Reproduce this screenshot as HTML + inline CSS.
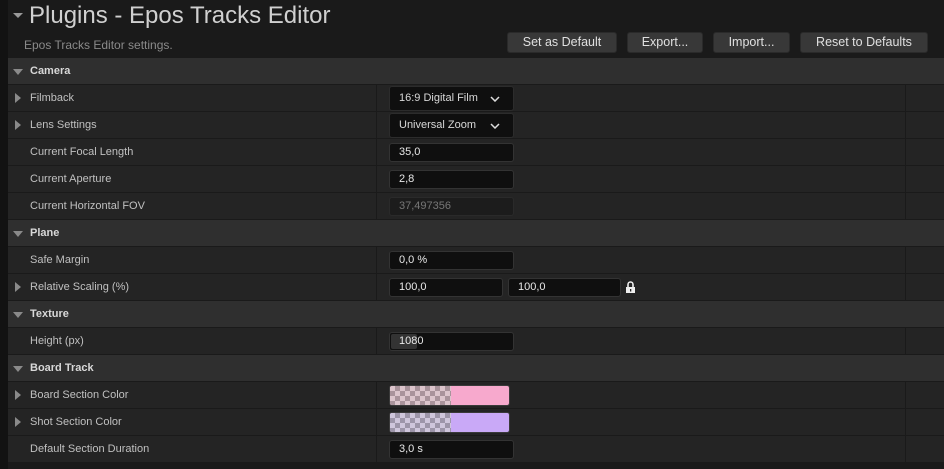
<!DOCTYPE html>
<html><head><style>
*{margin:0;padding:0;box-sizing:border-box}
body{width:944px;height:469px;background:#1a1a1a;font-family:"Liberation Sans",sans-serif;position:relative;overflow:hidden;color:#c0c0c0}
.strip{position:absolute;left:0;top:0;width:8px;height:469px;background:#121212}
.title{position:absolute;left:29px;top:2px;font-size:24px;color:#d0d0d0}
.tarrow{position:absolute;left:13px;top:13px;width:0;height:0;border-left:5px solid transparent;border-right:5px solid transparent;border-top:5px solid #999}
.sub{position:absolute;left:24px;top:38px;font-size:12px;color:#8a8a8a}
.btn{position:absolute;top:32px;height:21px;background:#383838;border-radius:3px;border:1px solid #2a2a2a;color:#e0e0e0;font-size:12.5px;text-align:center;line-height:19px}
.row{position:absolute;left:8px;width:936px;height:26px;background:#242424;font-size:11px;line-height:26px}
.hdr{background:#2f2f2f;font-weight:bold;color:#d8d8d8}
.row .l{position:absolute;left:22px}
.row .dv{position:absolute;left:368px;top:0;width:1px;height:26px;background:#1a1a1a}
.row .dv2{position:absolute;left:897px;top:0;width:1px;height:26px;background:#1a1a1a}
.ra{position:absolute;left:7px;top:8px;width:0;height:0;border-top:5px solid transparent;border-bottom:5px solid transparent;border-left:6px solid #8a8a8a}
.da{position:absolute;left:5px;top:11px;width:0;height:0;border-left:5px solid transparent;border-right:5px solid transparent;border-top:6px solid #8a8a8a}
.in{position:absolute;top:4px;height:19px;background:#0f0f0f;border:1px solid #333;border-radius:3px;color:#e8e8e8;font-size:11px;line-height:17px;padding-left:9px}
.cb{position:absolute;top:1px;height:25px;left:381px;width:125px;background:#0f0f0f;border:1px solid #2c2c2c;border-radius:3px;color:#d8d8d8;font-size:11px;line-height:23px;padding-left:9px}
.cb svg{position:absolute;right:13px;top:9px}
.col{position:absolute;top:3px;left:381px;width:121px;height:21px;border-radius:3px;overflow:hidden;border:1px solid #3a3a3a}
.chk{position:absolute;left:0;top:0;width:61px;height:21px;background-size:10px 10px;background-position:0 0,5px 5px}
</style></head><body>
<div class="strip"></div>
<div class="tarrow"></div>
<div class="title">Plugins - Epos Tracks Editor</div>
<div class="sub">Epos Tracks Editor settings.</div>
<div class="btn" style="left:507px;width:110px">Set as Default</div>
<div class="btn" style="left:627px;width:76px">Export...</div>
<div class="btn" style="left:713px;width:77px">Import...</div>
<div class="btn" style="left:800px;width:128px">Reset to Defaults</div>

<div class="row hdr" style="top:58px"><div class="da"></div><span class="l">Camera</span></div>
<div class="row" style="top:85px"><div class="ra"></div><span class="l">Filmback</span><div class="dv"></div><div class="dv2"></div><div class="cb">16:9 Digital Film<svg width="10" height="6"><path d="M1 1L5 5L9 1" stroke="#ddd" stroke-width="1.5" fill="none"/></svg></div></div>
<div class="row" style="top:112px"><div class="ra"></div><span class="l">Lens Settings</span><div class="dv"></div><div class="dv2"></div><div class="cb">Universal Zoom<svg width="10" height="6"><path d="M1 1L5 5L9 1" stroke="#ddd" stroke-width="1.5" fill="none"/></svg></div></div>
<div class="row" style="top:139px"><span class="l">Current Focal Length</span><div class="dv"></div><div class="dv2"></div><div class="in" style="left:381px;width:125px">35,0</div></div>
<div class="row" style="top:166px"><span class="l">Current Aperture</span><div class="dv"></div><div class="dv2"></div><div class="in" style="left:381px;width:125px">2,8</div></div>
<div class="row" style="top:193px"><span class="l">Current Horizontal FOV</span><div class="dv"></div><div class="dv2"></div><div class="in" style="left:381px;width:125px;background:#1c1c1c;border-color:#2a2a2a;color:#777">37,497356</div></div>

<div class="row hdr" style="top:220px"><div class="da"></div><span class="l">Plane</span></div>
<div class="row" style="top:247px"><span class="l">Safe Margin</span><div class="dv"></div><div class="dv2"></div><div class="in" style="left:381px;width:125px">0,0 %</div></div>
<div class="row" style="top:274px"><div class="ra"></div><span class="l">Relative Scaling (%)</span><div class="dv"></div><div class="dv2"></div><div class="in" style="left:381px;width:114px">100,0</div><div class="in" style="left:500px;width:113px">100,0</div>
<svg style="position:absolute;left:617px;top:6px" width="11" height="14"><path d="M3 7V4.5a2.5 2.5 0 0 1 5 0V7" stroke="#eee" stroke-width="1.6" fill="none"/><rect x="1" y="7" width="9" height="6" fill="#eee"/><rect x="5" y="9" width="1.3" height="2.5" fill="#222"/></svg></div>

<div class="row hdr" style="top:301px"><div class="da"></div><span class="l">Texture</span></div>
<div class="row" style="top:328px"><span class="l">Height (px)</span><div class="dv"></div><div class="dv2"></div><div class="in" style="left:381px;width:125px"><div style="position:absolute;left:1px;top:1px;width:26px;height:15px;background:#333;border-radius:2px"></div><span style="position:relative">1080</span></div></div>

<div class="row hdr" style="top:355px"><div class="da"></div><span class="l">Board Track</span></div>
<div class="row" style="top:382px"><div class="ra"></div><span class="l">Board Section Color</span><div class="dv"></div><div class="dv2"></div><div class="col" style="background:#f7a9cd"><div class="chk" style="background-color:#dcc5cc;background-image:linear-gradient(45deg,#a9939b 25%,transparent 25%,transparent 75%,#a9939b 75%),linear-gradient(45deg,#a9939b 25%,transparent 25%,transparent 75%,#a9939b 75%)"></div></div></div>
<div class="row" style="top:409px"><div class="ra"></div><span class="l">Shot Section Color</span><div class="dv"></div><div class="dv2"></div><div class="col" style="background:#c9a9f7"><div class="chk" style="background-color:#cfc6dc;background-image:linear-gradient(45deg,#9d95a9 25%,transparent 25%,transparent 75%,#9d95a9 75%),linear-gradient(45deg,#9d95a9 25%,transparent 25%,transparent 75%,#9d95a9 75%)"></div></div></div>
<div class="row" style="top:436px"><span class="l">Default Section Duration</span><div class="dv"></div><div class="dv2"></div><div class="in" style="left:381px;width:125px">3,0 s</div></div>
</body></html>
